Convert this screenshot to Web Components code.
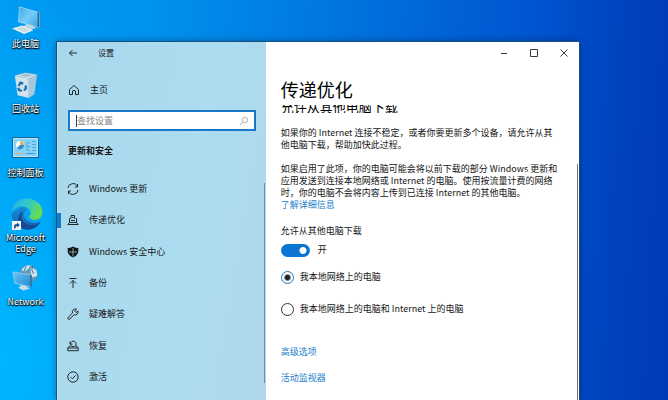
<!DOCTYPE html>
<html lang="zh-CN">
<head>
<meta charset="utf-8">
<title>设置</title>
<style>
  html, body { margin: 0; height: 100%; }
  body { font: 9px/12px "Noto Sans CJK SC", "Noto Sans", sans-serif; color: #151515; overflow: hidden; }
</style>
</head>
<body>
<win-desktop>
  <desk-icon slot="icons" label="此电脑" name="pc"></desk-icon>
  <desk-icon slot="icons" label="回收站" name="bin"></desk-icon>
  <desk-icon slot="icons" label="控制面板" name="panel"></desk-icon>
  <desk-icon slot="icons" label="Microsoft Edge" name="edge"></desk-icon>
  <desk-icon slot="icons" label="Network" name="network"></desk-icon>
  <settings-window>
    <settings-sidebar slot="sidebar">
      <nav-item icon="update">Windows 更新</nav-item>
      <nav-item icon="delivery" current>传递优化</nav-item>
      <nav-item icon="shield">Windows 安全中心</nav-item>
      <nav-item icon="backup">备份</nav-item>
      <nav-item icon="wrench">疑难解答</nav-item>
      <nav-item icon="recovery">恢复</nav-item>
      <nav-item icon="check">激活</nav-item>
    </settings-sidebar>
    <delivery-page></delivery-page>
  </settings-window>
</win-desktop>

<script>
const define = (name, html, setup) => {
  const template = document.createElement('template');
  template.innerHTML = html;
  customElements.define(name, class extends HTMLElement {
    connectedCallback() {
      if (this.shadowRoot) return;
      this.attachShadow({ mode: 'open' }).append(template.content.cloneNode(true));
      if (setup) setup(this, this.shadowRoot);
    }
  });
};

const reset = `
  * { box-sizing: border-box; }
  button, input { font: inherit; color: inherit; margin: 0; padding: 0; border: 0; background: none; }
  svg { display: block; flex: none; }
  .line { fill: none; stroke: currentColor; stroke-width: .9; }
`;

const deskArt = {
  pc: `<svg width="32" height="28" viewBox="0 0 34 30">
    <defs><linearGradient id="s" x1="0" y1="0" x2="1" y2="1"><stop offset="0" stop-color="#3faaea"/><stop offset=".5" stop-color="#74ccf8"/><stop offset="1" stop-color="#2b9fe4"/></linearGradient></defs>
    <path d="M10 1 31 7V23L9 17Z" fill="url(#s)" stroke="#b5d9ee" stroke-width=".8"/>
    <path d="M29.500 6.500 31 7V23L29.500 22.500Z" fill="#3c6077"/>
    <path d="M18 19 24 21 28 24 22 25 14 22Z" fill="#b9d3e2"/>
    <path d="M2 24 13 21 25 26 15 30Z" fill="#e9f0f4"/><path d="M6 24 13 22.200 22 26 15 28.500Z" fill="#cbd9e1"/></svg>`,
  bin: `<svg width="26" height="28" viewBox="0 0 28 30">
    <path d="M2 5 17 8 17 29 5 26Z" fill="#d3e2eb"/><path d="M17 8 26 4 23 25 17 29Z" fill="#a9c7d9"/>
    <path d="M2 5 13 2 26 4 17 8Z" fill="#e6eff4" stroke="#9cbccd" stroke-width=".6"/>
    <path d="M6 5 13 3 22 4.500 16 6.500Z" fill="#a5becc"/>
    <g fill="none" stroke="#1470ba" stroke-width="2.400"><path d="M6 16 8 12.500 11 13.500"/><path d="M13.500 15.500 14 18.500 12 21"/><path d="M9.500 21.500 6.500 20.500 5.700 18"/></g></svg>`,
  panel: `<svg width="27" height="21" viewBox="0 0 27 21" style="margin-bottom:5px">
    <rect x=".5" y=".5" width="26" height="20" fill="#86d3f9" stroke="#1b6494"/>
    <rect x="1.500" y="1.500" width="24" height="18" fill="none" stroke="#b4e5fd"/>
    <circle cx="8" cy="8" r="4" fill="#f4fafe"/><path d="M8 8V4A4 4 0 0 1 12 8Z" fill="#eeb743"/><path d="M8 8H12A4 4 0 0 1 5 11Z" fill="#2c8bd2"/>
    <path d="M15 6V13M15 5.500H18M15 9.500H18M15 13.500H18M20 4.500H24M20 7.500H24M20 10.500H24M20 13.500H24" fill="none" stroke="#3a9fdb" stroke-width=".8"/>
    <path d="M4 16.500H13" stroke="#e7b27a"/><path d="M14 16.500H23" stroke="#3c9ad8"/></svg>`,
  edge: `<svg width="34" height="34" viewBox="0 0 34 34">
    <defs><linearGradient id="a" x1="0" y1="0" x2="1" y2=".4"><stop stop-color="#2baee8"/><stop offset=".55" stop-color="#30c9c7"/><stop offset="1" stop-color="#68dc4e"/></linearGradient>
    <linearGradient id="b" x1="0" y1="0" x2="0" y2="1"><stop stop-color="#188ad6"/><stop offset="1" stop-color="#1562b2"/></linearGradient></defs>
    <path d="M2.500 16A15.500 15.500 0 0 0 18 32.500C24 32.500 29 29.500 31.500 25L24 18 14 9Z" fill="url(#b)"/>
    <path d="M2.500 16C3 7 10 1.500 18 1.500 27 1.500 33.500 8 33.500 15 33.500 20 30 23 25.500 23 22 23 20 21.500 20 20 20 18.500 21.500 18 21.500 15.500 21.500 12 17 9 12 9.500 7 10 3.500 13 2.500 16Z" fill="url(#a)"/>
    <path d="M14 14C10 20 14 28 23 28 27 28 30 27 31.500 25 28 31 22 33 17 32.500 8 30 7 18 14 14Z" fill="#134a91"/>
    <path d="M16 14C18 12 21.500 13 21.500 16 21.500 18.500 20 18.500 20 20 20 22 23 23 26 23 29 23 31 22 32 21L31 25C26 27 17 25 15.500 20 14.700 17.500 15 15 16 14Z" fill="#08a4f3"/>
    <rect x="3" y="24" width="9" height="9" fill="#f2f5fa"/><path d="M5 31.500V29Q5 27 8 27V25.500L11 28 8 30.500V29Q6.500 29 6.500 31.500Z" fill="#2351a1"/></svg>`,
  network: `<svg width="28" height="28" viewBox="0 0 30 29">
    <defs><linearGradient id="n" x1="0" y1="0" x2="1" y2="1"><stop stop-color="#6cc4f4"/><stop offset="1" stop-color="#218bd2"/></linearGradient></defs>
    <circle cx="18" cy="10" r="9.500" fill="#5f9ab9"/><path d="M10 6Q14 0 20 1 18 5 13 8ZM20 3 26 6 27 12 22 14 20 9Z" fill="#cfe3ec"/><path d="M15 2Q11 8 13 15M22 1Q20 5 23 10" stroke="#326f93" fill="none"/>
    <path d="M1 8 20 11V24L3 20Z" fill="url(#n)" stroke="#a6d5ee" stroke-width=".8"/><path d="M19.500 11 21 11.500V24.500L19.500 24Z" fill="#28628a"/>
    <path d="M10 22 15 23 19 26 12 28 7 25Z" fill="#c7dbe7"/></svg>`
};

const navArt = {
  home: `<path class="line" d="M1.500 5.500 6 1.500 10.500 5.500V10.500H7.500V7Q6 5.500 4.500 7V10.500H1.500Z"/>`,
  update: `<path class="line" d="M1 5A5 5 0 0 1 10.500 3.500M11 7A5 5 0 0 1 1.500 8.500M10.500 1V4H8M1.500 11V8H4"/>`,
  delivery: `<path class="line" d="M3.500 4.500H2.500V8.500H9.500V4.500H8.500M2.500 8.500 .8 10.500H11.200L9.500 8.500M4 6.500H8M4 4.500V1.500H7.500V4.500"/><path class="line" d="M5 3.500H6.500"/>`,
  shield: `<path fill="currentColor" d="M6 .5Q8.500 2 11.300 2V6Q10.500 9.500 6 11.500 1.500 9.500 .7 6V2Q3.500 2 6 .5Z"/><path d="M6 2V10.500M2 6H10" stroke="#aedaed" stroke-width=".7"/>`,
  backup: `<path class="line" d="M2.500 1.500H9.500M6 11V3.500M3 6.500 6 3.500 9 6.500"/>`,
  wrench: `<path class="line" d="M9.500 1.200A3 3 0 0 0 5.500 5L1.200 9.300A1.200 1.200 0 0 0 2.900 11L7 6.700A3 3 0 0 0 11 3L9 4.500 7.700 3.200Z"/>`,
  recovery: `<path class="line" d="M.8 8H11.200V10.700H.8ZM.8 8 2.500 6H4.500M11.200 8 9.500 6H8M4.500 6.500H7.500M3.500 4A2.800 2.800 0 1 1 7.800 6.300M3 1.500V4.200H5.500"/>`,
  check: `<circle class="line" cx="6" cy="6" r="5.200"/><path class="line" d="M3.500 6 5.300 7.800 8.700 4.300"/>`
};
const navSvg = name => `<svg width="12" height="12" viewBox="0 0 12 12" aria-hidden="true">${navArt[name]}</svg>`;

define('desk-icon', `<style>${reset}
  :host { display: block; }
  button { display: flex; flex-direction: column; align-items: center; justify-content: flex-end; gap: 4px; width: 100%; height: 100%; color: #fff;
    text-shadow: 0 1px 1px #000, 1px 1px 1px #000c, 0 0 2px #000c; line-height: 11px; }
  :host([name="edge"]) button { gap: 1px; }
  span { max-width: 48px; }
</style><button type="button"><i></i><span></span></button>`, (host, root) => {
  root.querySelector('i').outerHTML = deskArt[host.getAttribute('name')];
  root.querySelector('span').textContent = host.getAttribute('label');
});

define('win-desktop', `<style>${reset}
  :host { display: grid; grid-template-columns: 57px minmax(0, 1fr); min-height: 100vh; padding-right: 89px;
    background: radial-gradient(ellipse 40% 90% at 0% 90%, #00b5ff 0%, #00b5ff00 100%),
      linear-gradient(93deg, #009cf2 0%, #0092ee 22%, #0074df 50%, #0054d0 78%, #0042be 91%, #003ab5 100%); }
  .icons { display: grid; grid-template-rows: 49px 65px 64px 76px 53px; padding: 0 6px 0 0; align-content: start; }
  .stage { display: flex; padding-top: 42px; }
</style>
<div class="icons"><slot name="icons"></slot></div>
<div class="stage"><slot></slot></div>`);

define('settings-window', `<style>${reset}
  :host { flex: 1; display: grid; grid-template-columns: 2fr 3fr; min-width: 0; background: #fff; box-shadow: 0 0 0 1px #174f80, 0 0 8px #0006; }
  main { display: flex; flex-direction: column; min-width: 0; }
  .bar { display: flex; justify-content: flex-end; height: 22px; color: #222; }
  .bar button { width: 30px; display: grid; place-items: center; }
</style>
<slot name="sidebar"></slot>
<main>
  <div class="bar">
    <button type="button" aria-label="最小化"><svg width="8" height="8"><path class="line" d="M1 4.500H7"/></svg></button>
    <button type="button" aria-label="最大化"><svg width="8" height="8"><path class="line" d="M.5 .5H7.500V7.500H.5Z"/></svg></button>
    <button type="button" aria-label="关闭"><svg width="8" height="8"><path class="line" d="M.5 .5 7.500 7.500M7.500 .5.500 7.500"/></svg></button>
  </div>
  <slot></slot>
</main>`);

define('settings-sidebar', `<style>${reset}
  :host { display: flex; flex-direction: column; min-width: 0; border-left: 1px solid #b9e1f2;
    background: linear-gradient(100deg, #a9d8ec, #acdcf0 60%, #afd8ea); }
  .title { display: flex; align-items: center; gap: 20px; height: 22px; padding-left: 10px; line-height: 12px; font-size: 8px; }
  .title button { display: flex; }
  .home { display: flex; align-items: center; gap: 10px; margin: 18px 0 0 10px; height: 16px; align-self: flex-start; }
  .search { display: flex; align-items: center; margin: 12px 10px 0 10px; height: 21px; background: #fff; border: 2px solid #1b78c4; padding: 0 5px 0 6px; color: #aaa; }
  .search::before { content: ""; width: 1px; height: 12px; background: #444; }
  input { flex: 1; min-width: 0; outline: 0; color: #151515; }
  input::placeholder { color: #888; opacity: 1; }
  h2 { font-size: 9px; line-height: 12px; font-weight: 700; margin: 14px 0 0 10px; }
  nav { flex: 1; display: flex; flex-direction: column; margin: 16px 0 7px 0; position: relative; }
  nav::after { content: ""; position: absolute; right: 1px; top: 10px; bottom: 10px; width: 1px; background: #708f9e; }
</style>
<div class="title"><button type="button" aria-label="返回"><svg width="10" height="10"><path class="line" d="M9 5H1.500M4.500 2 1.500 5 4.500 8"/></svg></button><span>设置</span></div>
<button class="home" type="button">${navSvg('home')}<span>主页</span></button>
<label class="search"><input type="text" placeholder="查找设置" aria-label="查找设置"><svg width="10" height="10"><path class="line" d="M1 9 4 6"/><circle class="line" cx="6" cy="4" r="2.800"/></svg></label>
<h2>更新和安全</h2>
<nav><slot></slot></nav>`);

define('nav-item', `<style>${reset}
  :host { display: flex; flex: 1; }
  button { flex: 1; display: flex; align-items: center; gap: 10px; padding-left: 9px; text-align: left; position: relative; }
  :host([current]) button::before { content: ""; position: absolute; left: -1px; width: 4px; height: 15px; background: #0e7fcb; }
</style><button type="button"><i></i><span><slot></slot></span></button>`, (host, root) => {
  root.querySelector('i').outerHTML = navSvg(host.getAttribute('icon'));
});

define('delivery-page', `<style>${reset}
  :host { flex: 1; display: flex; flex-direction: column; align-items: flex-start; padding: 13px 18px 0 15px; position: relative; }
  :host::after { content: ""; position: absolute; right: 1px; top: 100px; bottom: 0; width: 1px; background: #777; }
  h1 { font-size: 18px; line-height: 24px; font-weight: 400; margin: 0; color: #000; }
  .scrolled { display: flex; align-items: flex-end; height: 8px; overflow: hidden; margin: 4px 0 14px; }
  h2 { font-size: 13px; line-height: 13px; font-weight: 400; margin: 0; color: #000; }
  p { margin: 0 0 12px; }
  a { color: #1b7ecb; text-decoration: none; }
  .tail { margin: 0; }
  .caption { margin-top: 14px; }
  label { display: flex; align-items: center; }
  .switch { gap: 8px; margin-top: 6px; height: 14px; }
  .switch input { appearance: none; width: 29px; height: 13px; border-radius: 7px; background: radial-gradient(circle at 22px 50%, #fff 3px, #0b76d1 4px); }
  .choice { gap: 6px; height: 14px; margin-top: 13px; }
  .choice + .choice { margin-top: 18px; }
  .choice input { appearance: none; width: 13px; height: 13px; border: 1px solid #333; border-radius: 50%; background: #fff; }
  .choice input:checked { border: 1px solid #1879be; background: radial-gradient(circle, #222 2px, #fff 4px); }
  .more { margin-top: 30px; }
  .more + .more { margin-top: 14px; }
</style>
<h1>传递优化</h1>
<div class="scrolled"><h2>允许从其他电脑下载</h2></div>
<p>如果你的 Internet 连接不稳定，或者你要更新多个设备，请允许从其他电脑下载，帮助加快此过程。</p>
<p class="tail">如果启用了此项，你的电脑可能会将以前下载的部分 Windows 更新和应用发送到连接本地网络或 Internet 的电脑。使用按流量计费的网络时，你的电脑不会将内容上传到已连接 Internet 的其他电脑。</p>
<a href="#details">了解详细信息</a>
<span class="caption" id="cap">允许从其他电脑下载</span>
<label class="switch"><input type="checkbox" role="switch" checked aria-labelledby="cap"><span>开</span></label>
<label class="choice"><input type="radio" name="source" checked><span>我本地网络上的电脑</span></label>
<label class="choice"><input type="radio" name="source"><span>我本地网络上的电脑和 Internet 上的电脑</span></label>
<a class="more" href="#advanced">高级选项</a>
<a class="more" href="#monitor">活动监视器</a>`);
</script>
</body>
</html>
